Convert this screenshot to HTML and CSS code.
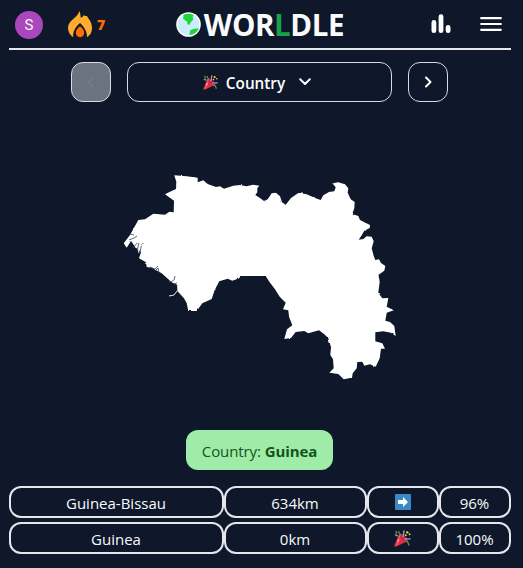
FILE: index.html
```html
<!DOCTYPE html>
<html lang="en">
<head>
<meta charset="utf-8">
<title>Worldle</title>
<link rel="stylesheet" href="styles.css">
</head>
<body>
<svg class="defs" aria-hidden="true">
  <symbol id="party" viewBox="0 0 36 36">
    <path fill="#dd2e44" d="M11.6 7.6 1 31.5c-1 3 1 4.500 4 3.500L28.500 24C29 19 18 7 11.600 7.600z"/>
    <path fill="#ea596e" d="M13 12 9 31l-5 3 7-25z"/>
    <path fill="#c01f38" d="M12 8c5-1 18 11 16 16-5 2-17-10-16-16z"/>
    <path fill="none" stroke="#aa8dd8" stroke-width="3" d="M18 15c5-4 0-8 4-14M2 10l6 3M22 20c4-4 8 2 13-2"/>
    <path fill="none" stroke="#5c913b" stroke-width="3" d="M14 13C16 8 8 8 10 2M24 25c4-3 6 1 8 8M4 2l2 6"/>
    <g fill="#ffcc4d"><circle cx="28" cy="5" r="2.500"/><circle cx="33" cy="9" r="2"/><circle cx="25" cy="11" r="2"/><circle cx="9" cy="22" r="2"/></g>
  </symbol>
</svg>
<div class="app">
  <header class="header">
    <div class="side">
      <span class="avatar">S</span>
      <span class="streak">
        <svg width="24" height="27" viewBox="0 0 24 27"><path fill="#ffab2e" d="M11.500 0c1.200 2.800.8 4.700 1.300 6.700 1.800-.4 2.600-1.700 3-2.700 1.200 1.300 2 1 3.200.9 1 2.500 5 5.500 5 12.100 0 4-1.700 7.400-5 9.200.2-5-2.500-10-7-14.200-4.500 3.700-7.500 9-6.700 14.200C2 24.200 0 20.800 0 17 0 9.300 8.700 8 11.500 0z"/><path fill="#ff6d00" d="M12 15.200c2.500 2 4.200 4 4.200 6.600 0 2.800-1.800 4.400-4.200 4.400s-4.200-1.600-4.200-4.400c0-2.600 1.700-4.600 4.200-6.600z"/></svg>
        <b>7</b>
      </span>
    </div>
    <h1 class="logo">
      <svg width="25" height="25" viewBox="0 0 25 25"><circle cx="12.500" cy="12.500" r="12.300" fill="#fff"/><circle cx="12.500" cy="12.500" r="10.800" fill="#c9edff"/><path fill="#1fd537" d="M7.500 2.800c3-1.500 7-1.500 10.200.2l-1.200 2 1 2-2.500 3-1.700 3-1.800-.7-.5-2.800L7.200 7zM14 18.500l3-1.500 5.800-.7c-1 2.700-3.300 5-5.500 6l-3.800.7z"/></svg>
      <span>WOR<em>L</em>DLE</span>
    </h1>
    <div class="tools">
      <svg width="20" height="20" viewBox="0 0 20 20" fill="none" stroke="#fff" stroke-width="4.800" stroke-linecap="round"><path d="M2.900 8.500v8.200M10 2.700v14M17.100 13.500v3.200"/></svg>
      <svg width="22" height="16" viewBox="0 0 22 16" fill="none" stroke="#fff" stroke-width="2.200" stroke-linecap="round"><path d="M1.200 2.200h19.600M1.200 8h19.600M1.200 13.800h19.600"/></svg>
    </div>
  </header>
  <nav class="rounds">
    <button class="step disabled" disabled><svg class="chevron" width="8" height="12" viewBox="0 0 8 12"><path d="M6 1.500 1.500 6 6 10.500"/></svg></button>
    <button class="picker"><svg width="15" height="15"><use href="#party"/></svg><span>Country</span><svg class="chevron" width="12" height="8" viewBox="0 0 12 8"><path d="M1.200 1.200 6 6l4.800-4.800"/></svg></button>
    <button class="step"><svg class="chevron" width="8" height="12" viewBox="0 0 8 12"><path d="M2 1.500 6.500 6 2 10.500"/></svg></button>
  </nav>
  <main class="map">
    <svg width="290" height="225" viewBox="115 165 290 225">
      <filter id="coast" x="-2%" y="-2%" width="104%" height="104%" color-interpolation-filters="sRGB">
        <feTurbulence type="fractalNoise" baseFrequency="0.25" numOctaves="1" seed="4"/>
        <feDisplacementMap in="SourceGraphic" scale="2.2" xChannelSelector="R" yChannelSelector="G"/>
      </filter>
      <g filter="url(#coast)">
      <path fill="#fff" d="M174.300 175.300L186.700 176.300 197.700 177.700 197.700 182.300 203.300 180.300 206.700 183.300 208.300 184.300 216 187 220 186.300 224 188.700 233.300 185.700 240 185 246.300 186.300 253.300 184.700 259.300 185.700 257.300 188.300 257.300 192.300 255.300 195 260 198 264 201 267.700 199.300 271.700 193.300 276 192.700 280 196.300 282 202.300 285.700 204.700 291 198 298.300 193 306.700 194.300 315 198 320.700 200 323.300 195.300 329 192 334.300 191.300 335.700 187.300 332.300 183.300 338.300 182.300 345 184.300 348.300 188.300 347.700 192.700 350.700 199.300 354.700 202 354.300 208.300 352.300 214 358.300 216 360 220 370 225 369.700 228 364.300 230.700 361.700 235.300 358.700 239.700 363.300 239 366.700 236.300 371.700 236.700 373.700 241.300 371.700 248.300 373.700 256 375.300 260 379 259.300 381 263 385.300 266 384.300 270.700 378.500 274.700 379.700 281.700 378.300 292.700 382.300 298.300 388.300 298 386.700 306.700 393.800 310.300 386.700 312.700 385.300 320.700 390 322 394.300 326 395.700 336 391 332.700 383.300 331.300 375.300 332.300 375.300 341.300 382.300 343.300 385 348.700 381 348.700 379.700 358.300 375.700 366.700 370 364.300 364.300 365.700 362.300 361.700 357.300 362 356.700 368.300 352.700 373.300 352 377.700 343.700 379.300 338.300 374 329.300 372.700 333.700 368.300 333 359.300 330.300 355 331 347.300 328.300 338.300 324.300 334.300 319 330.300 308.300 333.300 304.300 331 295.700 332 291 338 284.300 339 287 329.300 292.300 325.300 289 316.700 288.300 310.300 283 309.300 285.700 302.700 279.700 296.700 275 289.300 269.300 281.700 265.700 276 240.300 276 239.300 278.300 232.300 280.700 227.700 278.700 219.300 281.300 214.700 290 211.700 299 202.300 303.300 196.700 311 188.300 311 186.700 303.300 184 298.300 177.300 291 177.300 285 171.700 282.300 161.700 273.300 151.700 267.700 146.700 267 146 262.300 139 258.300 141 252.300 135 246.700 131 241 126.700 247.700 123.700 243.300 130 235 138.300 220 145 219.300 153.300 213.700 165 214.700 169.300 211.700 173.700 212.300 174 200.700 165 194.300 170 191.700 176 189 176.300 181.700Z"/>
      <path class="islands" d="M134 242l2 6M137 246l2 7M177 291l-3 4-5 1"/>
      <path class="inlets" d="M129 240l5-2 3-2M130 234l4 1M133 248l5-6M137 251l2-8M140 254l1-7 2-4M150 267l5 2 3-3M155 271l3-3 1 5M171 282l3-2 1-4M174 284l3-1"/>
      </g>
    </svg>
  </main>
  <div class="answer">Country:&nbsp;<b>Guinea</b></div>
  <section class="guesses">
    <div class="row"><span>Guinea-Bissau</span><span>634km</span><span><svg width="16" height="16" viewBox="0 0 16 16"><rect width="16" height="16" rx="1" fill="#3b88c3"/><path fill="#fff" d="M3 6h5V3l5 5-5 5v-3H3z"/></svg></span><span>96%</span></div>
    <div class="row"><span>Guinea</span><span>0km</span><span><svg width="17" height="17"><use href="#party"/></svg></span><span>100%</span></div>
  </section>
</div>
</body>
</html>
```
FILE: styles.css
```css
* { box-sizing: border-box; }
body {
  margin: 0;
  background: #0f172a;
  color: #f8fafc;
  font-family: "Open Sans", "Noto Sans", sans-serif;
  font-size: 16px;
}
.defs { display: none; }
.app {
  width: 502px;
  height: 568px;
  margin-left: 9px;
  display: flex;
  flex-direction: column;
}
.header {
  height: 50px;
  border-bottom: 2px solid #e5e7eb;
  display: grid;
  grid-template-columns: 1fr auto 1fr;
  align-items: center;
}
.side { display: flex; align-items: center; gap: 25px; padding-left: 6px; }
.avatar {
  width: 28px;
  height: 28px;
  border-radius: 50%;
  background: #ab47bc;
  font: 15px/28px Roboto, sans-serif;
  text-align: center;
}
.streak { display: flex; align-items: center; gap: 5px; color: #ff6d00; font-size: 14px; }
.streak svg { margin-top: -1px; }
.streak b { font-weight: 800; margin-top: -1px; }
.logo {
  display: flex;
  align-items: center;
  gap: 3px;
  margin: 0;
  font-size: 29.5px;
  line-height: 48px;
  font-weight: 700;
  letter-spacing: -0.4px;
}
.logo svg { margin-top: -1px; }
.logo span { padding-top: 1px; }
.logo em { font-style: normal; color: #16a34a; }
.tools { display: flex; justify-content: flex-end; align-items: center; gap: 29px; padding-right: 9px; }
.tools svg { margin-top: -1px; }
.rounds { display: flex; justify-content: center; gap: 16px; margin: 12px 1px 0 0; }
.rounds button {
  height: 40px;
  padding: 0;
  border: 1px solid #d7dce4;
  border-radius: 12px;
  background: none;
  color: #fff;
  font: 600 15.3px "Open Sans", sans-serif;
  display: flex;
  align-items: center;
  justify-content: center;
}
.chevron { fill: none; stroke: currentColor; stroke-width: 2; stroke-linecap: round; stroke-linejoin: round; }
.rounds .step { width: 40px; }
.rounds .disabled { background: #6b7280; color: #7c7b7b; }
.rounds .picker { width: 265px; padding-right: 5px; }
.picker span { margin: 2px 14px 0 8px; }
.map { height: 328px; padding-top: 63px; display: flex; justify-content: center; align-items: flex-start; }
.map svg { flex: none; }
.inlets { fill: none; stroke: #334056; stroke-width: 0.8; }
.islands { fill: none; stroke: #fff; stroke-width: 0.9; }
.answer {
  align-self: center;
  display: flex;
  justify-content: center;
  align-items: center;
  width: 147px;
  height: 40px;
  margin-right: 1px;
  padding-top: 2px;
  border-radius: 12px;
  background: #9feca8;
  color: #14531d;
  font-size: 15px;
  letter-spacing: -0.1px;
}
.guesses { display: grid; gap: 4px; margin-top: 16px; }
.row { display: grid; grid-template-columns: 215px 143px 72px 72px; height: 32px; font-size: 15px; }
.row span {
  display: flex;
  align-items: center;
  justify-content: center;
  border: 2px solid #e5e7eb;
  border-radius: 12px;
  padding: 2px 1px 0 0;
}
.row svg { margin-top: -2px; }
```
